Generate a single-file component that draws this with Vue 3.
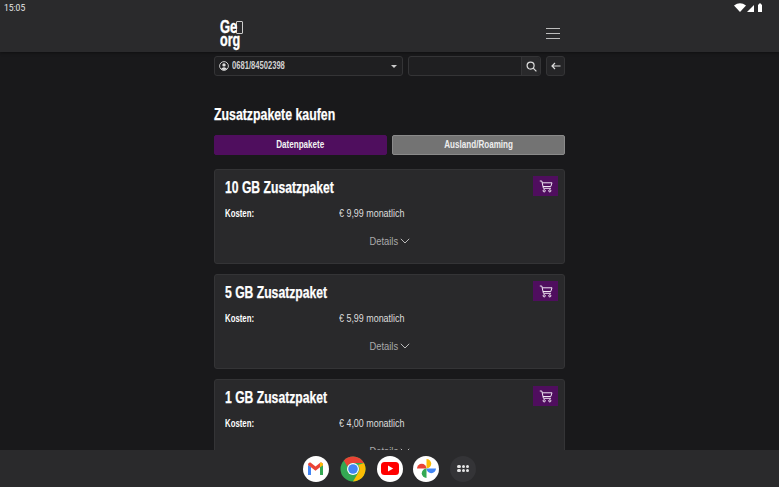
<template>
  <div class="screen">
    <div class="top">
      <div class="status">
        <span class="time">15:05</span>
        <svg class="status-icons" width="30" height="12" viewBox="0 0 30 12">
          <path d="M0 3.5 Q6 -0.8 12 3.5 L6 10 Z" fill="#fff" />
          <path d="M13 10 L20 3 V10 Z" fill="#fff" />
          <path d="M24 2.5 H25 V1.5 H27 V2.5 H28 V10 H24 Z" fill="#fff" />
        </svg>
      </div>
      <header class="header">
        <div class="header-inner">
          <div class="logo">
            <div class="logo-line"><span class="logo-ge">Ge</span><span class="logo-box"></span></div>
            <div class="logo-line"><span class="logo-org">org</span></div>
          </div>
          <div class="burger"><i></i><i></i><i></i></div>
        </div>
      </header>
    </div>

    <main class="main">
      <div class="content">
        <div class="controls">
          <div class="select">
            <svg width="10" height="10" viewBox="0 0 10 10">
              <circle cx="5" cy="5" r="4.4" fill="none" stroke="#ddd" stroke-width="0.9" />
              <circle cx="5" cy="3.9" r="1.7" fill="#ddd" />
              <path d="M1.9 8 Q5 4.6 8.1 8 Q5 10.2 1.9 8Z" fill="#ddd" />
            </svg>
            <span class="number-wrap"><span class="number">0681/84502398</span></span>
            <span class="caret"></span>
          </div>
          <div class="search">
            <div class="search-input"></div>
            <button class="search-btn">
              <svg width="11" height="11" viewBox="0 0 11 11" fill="none" stroke="#ddd" stroke-width="1.2">
                <circle cx="4.6" cy="4.6" r="3.5" />
                <path d="M7.2 7.2 L10.4 10.4" />
              </svg>
            </button>
          </div>
          <button class="back">
            <svg width="10" height="8" viewBox="0 0 10 8" fill="none" stroke="#ddd" stroke-width="1.2">
              <path d="M9.5 4 H1 M4 1 L1 4 L4 7" />
            </svg>
          </button>
        </div>

        <h1 class="title"><span>Zusatzpakete kaufen</span></h1>

        <div class="tabs">
          <button class="tab active"><span>Datenpakete</span></button>
          <button class="tab"><span>Ausland/Roaming</span></button>
        </div>

        <section v-for="p in packages" :key="p.name" class="card">
          <div class="card-head">
            <h2 class="card-title"><span>{{ p.name }}</span></h2>
            <button class="cart">
              <svg width="14" height="13" viewBox="0 0 14 13" fill="none" stroke="#f0e4f4" stroke-width="1">
                <path d="M0.8 1 H2.8 L4.4 8.3 H12" />
                <path d="M3.2 2.8 H13 L11.8 6.5 H4" />
                <circle cx="5.2" cy="10.8" r="1.1" />
                <circle cx="10.8" cy="10.8" r="1.1" />
              </svg>
            </button>
          </div>
          <div class="cost">
            <div class="cost-label"><span>Kosten:</span></div>
            <div class="cost-value"><span>{{ p.price }}</span></div>
          </div>
          <div class="details">
            <span class="details-text">Details</span>
            <svg width="10" height="6" viewBox="0 0 10 6" fill="none" stroke="#bbb" stroke-width="1">
              <path d="M0.8 0.8 L5 5 L9.2 0.8" />
            </svg>
          </div>
        </section>
      </div>
    </main>

    <footer class="dock">
      <div class="app white">
        <svg width="17" height="13" viewBox="0 0 17 13">
          <path d="M1 13 V3 L4 5 V13 Z" fill="#4285f4" />
          <path d="M13 13 V5 L16 3 V13 Z" fill="#34a853" />
          <path d="M1 3 Q1 0 3.5 0.6 L8.5 4.6 L13.5 0.6 Q16 0 16 3 L13 5.2 L8.5 8.8 L4 5.2 Z" fill="#ea4335" />
          <path d="M13 5.2 L16 3 Q16 0 13.5 0.6 L13 1 Z" fill="#fbbc04" />
        </svg>
      </div>
      <div class="app chrome">
        <svg width="26" height="26" viewBox="0 0 26 26">
          <circle cx="13" cy="13" r="12.5" fill="#34a853" />
          <path d="M13 0.5 A12.5 12.5 0 0 1 24 7 H13 A6 6 0 0 0 7.4 10.5 L3.8 4.6 A12.5 12.5 0 0 1 13 0.5Z" fill="#ea4335" />
          <path d="M24 7 A12.5 12.5 0 0 1 13 25.5 L18 17 A6 6 0 0 0 18 9 Z" fill="#fbbc04" />
          <circle cx="13" cy="13" r="6" fill="#fff" />
          <circle cx="13" cy="13" r="4.8" fill="#4285f4" />
        </svg>
      </div>
      <div class="app white">
        <svg width="18" height="13" viewBox="0 0 18 13">
          <rect width="18" height="13" rx="3.5" fill="#f00" />
          <path d="M7 3.5 L12.2 6.5 L7 9.5 Z" fill="#fff" />
        </svg>
      </div>
      <div class="app white">
        <svg width="19" height="19" viewBox="0 0 20 20">
          <path d="M5 5 A5 5 0 0 1 10 10 H0 A5 5 0 0 1 5 5Z" fill="#ea4335" />
          <path d="M15 5 A5 5 0 0 1 10 10 V0 A5 5 0 0 1 15 5Z" fill="#fbbc04" />
          <path d="M15 15 A5 5 0 0 1 10 10 H20 A5 5 0 0 1 15 15Z" fill="#4285f4" />
          <path d="M5 15 A5 5 0 0 1 10 10 V20 A5 5 0 0 1 5 15Z" fill="#34a853" />
        </svg>
      </div>
      <div class="app grid-app">
        <span v-for="n in 6" :key="n" class="dot"></span>
      </div>
    </footer>
  </div>
</template>

<script setup>
const packages = [
  { name: '10 GB Zusatzpaket', price: '€ 9,99 monatlich' },
  { name: '5 GB Zusatzpaket', price: '€ 5,99 monatlich' },
  { name: '1 GB Zusatzpaket', price: '€ 4,00 monatlich' },
]
</script>

<style>
html,
body {
  margin: 0;
  background: #19191b;
}
</style>

<style scoped>
.screen {
  width: 779px;
  height: 487px;
  display: flex;
  flex-direction: column;
  overflow: hidden;
  background: #19191b;
  color: #fff;
  font-family: "Liberation Sans", sans-serif;
}

/* no narrow font installed, so the condensed type is squeezed horizontally */
.logo-ge,
.logo-org,
.number,
.title span,
.card-title span,
.cost-label span,
.cost-value span {
  display: inline-block;
  white-space: nowrap;
  transform-origin: left center;
}

.tab span,
.details-text {
  display: inline-block;
  white-space: nowrap;
  transform-origin: center;
}

.top {
  background: #2a2a2c;
  box-shadow: 0 1px 3px rgba(0, 0, 0, 0.4);
}

.status {
  height: 14px;
  padding: 1px 15px 0 4px;
  box-sizing: border-box;
  display: flex;
  align-items: center;
  justify-content: space-between;
}

.time {
  font-family: Roboto, sans-serif;
  font-size: 8.5px;
  color: #e8e8e8;
}

.header {
  height: 38px;
}

.header-inner {
  width: 351px;
  height: 100%;
  margin: 0 auto;
  padding: 0 5px 0 6px;
  box-sizing: border-box;
  display: flex;
  align-items: center;
  justify-content: space-between;
}

.logo {
  font-weight: 700;
  font-size: 18px;
  line-height: 13px;
  padding-top: 1px;
  -webkit-text-stroke: 0.4px #fff;
}

.logo-line {
  display: flex;
  align-items: flex-start;
  width: 26px;
}

.logo-ge {
  transform: scaleX(0.72);
}

.logo-org {
  transform: scaleX(0.7);
}

.logo-box {
  width: 7px;
  height: 13px;
  margin-left: -8px;
  border: 1px solid #ccc;
  border-radius: 1px;
  box-sizing: border-box;
}

.burger {
  width: 14px;
  display: flex;
  flex-direction: column;
  gap: 4px;
}

.burger i {
  height: 1px;
  background: #bdbdbd;
}

.main {
  flex: 1;
  min-height: 0;
  overflow: hidden;
}

.content {
  width: 351px;
  margin: 0 auto;
  padding-top: 4px;
}

.controls {
  display: flex;
  gap: 5px;
  height: 20px;
}

.select,
.search,
.back {
  box-sizing: border-box;
  border: 1px solid #343436;
  border-radius: 3px;
  background: #1f1f21;
}

.select {
  width: 189px;
  display: flex;
  align-items: center;
  gap: 3px;
  padding: 0 5px 0 4px;
}

.number-wrap {
  flex: 1;
  display: flex;
  align-items: center;
}

.number {
  font-size: 10px;
  line-height: 12px;
  font-weight: 700;
  color: #d2d2d2;
  transform: scaleX(0.76);
}

.caret {
  border-left: 3px solid transparent;
  border-right: 3px solid transparent;
  border-top: 3px solid #ccc;
}

.search {
  width: 133px;
  display: flex;
}

.search-input {
  flex: 1;
}

.search-btn,
.back {
  padding: 0;
  display: flex;
  align-items: center;
  justify-content: center;
}

.search-btn {
  width: 19px;
  border: 0;
  border-left: 1px solid #343436;
  background: #29292b;
  border-radius: 0 3px 3px 0;
}

.back {
  width: 19px;
  background: #252527;
}

.title {
  margin: 29px 0 0;
  height: 20px;
  font-size: 16px;
  line-height: 20px;
  font-weight: 700;
  -webkit-text-stroke: 0.25px #fff;
}

.title span {
  transform: scaleX(0.77);
}

.tabs {
  display: flex;
  gap: 5px;
  margin-top: 10px;
}

.tab {
  flex: 1;
  height: 20px;
  padding: 0 0 3px;
  border: 1px solid #8a8a8a;
  border-radius: 2px;
  background: #737373;
  color: #eee;
  font: 700 10.5px "Liberation Sans", sans-serif;
}

.tab span {
  transform: scaleX(0.77);
}

.tab.active {
  background: #4f0e5e;
  border-color: #4f0e5e;
  color: #f2f2f2;
}

.card {
  box-sizing: border-box;
  height: 95.2px;
  margin-top: 14px;
  padding: 6px 6px 0 10px;
  background: #29292b;
  border: 1px solid #343436;
  border-radius: 3px;
}

.card + .card {
  margin-top: 10px;
}

.card-head {
  display: flex;
  justify-content: space-between;
  align-items: flex-start;
  height: 23px;
}

.card-title {
  margin: 3px 0 0;
  font-size: 16px;
  line-height: 18px;
  font-weight: 700;
  -webkit-text-stroke: 0.25px #fff;
}

.card-title span {
  transform: scaleX(0.76);
}

.cart {
  width: 25px;
  height: 20px;
  padding: 0;
  border: 0;
  background: #4f0e5e;
  display: flex;
  align-items: center;
  justify-content: center;
}

.cost {
  margin-top: 7px;
  display: flex;
  font-size: 11px;
  line-height: 14px;
}

.cost-label {
  width: 114px;
  font-weight: 700;
}

.cost-label span {
  transform: scaleX(0.71);
}

.cost-value {
  color: #ddd;
}

.cost-value span {
  transform: scaleX(0.81);
}

.details {
  margin-top: 14px;
  padding-right: 6px;
  display: flex;
  justify-content: center;
  align-items: center;
  font-size: 11px;
  line-height: 14px;
  color: #aaa;
}

.details-text {
  transform: scaleX(0.85);
}

.dock {
  height: 37px;
  flex-shrink: 0;
  background: #2a2a2c;
  display: flex;
  justify-content: center;
  align-items: center;
  gap: 10.8px;
}

.app {
  width: 26px;
  height: 26px;
  border-radius: 50%;
  display: flex;
  align-items: center;
  justify-content: center;
}

.white {
  background: #fff;
}

.grid-app {
  background: #343437;
  display: grid;
  grid-template-columns: repeat(3, 3.2px);
  gap: 1px;
  align-content: center;
  justify-content: center;
}

.dot {
  width: 3.2px;
  height: 3.2px;
  border-radius: 50%;
  background: #e6e6e6;
}
</style>
